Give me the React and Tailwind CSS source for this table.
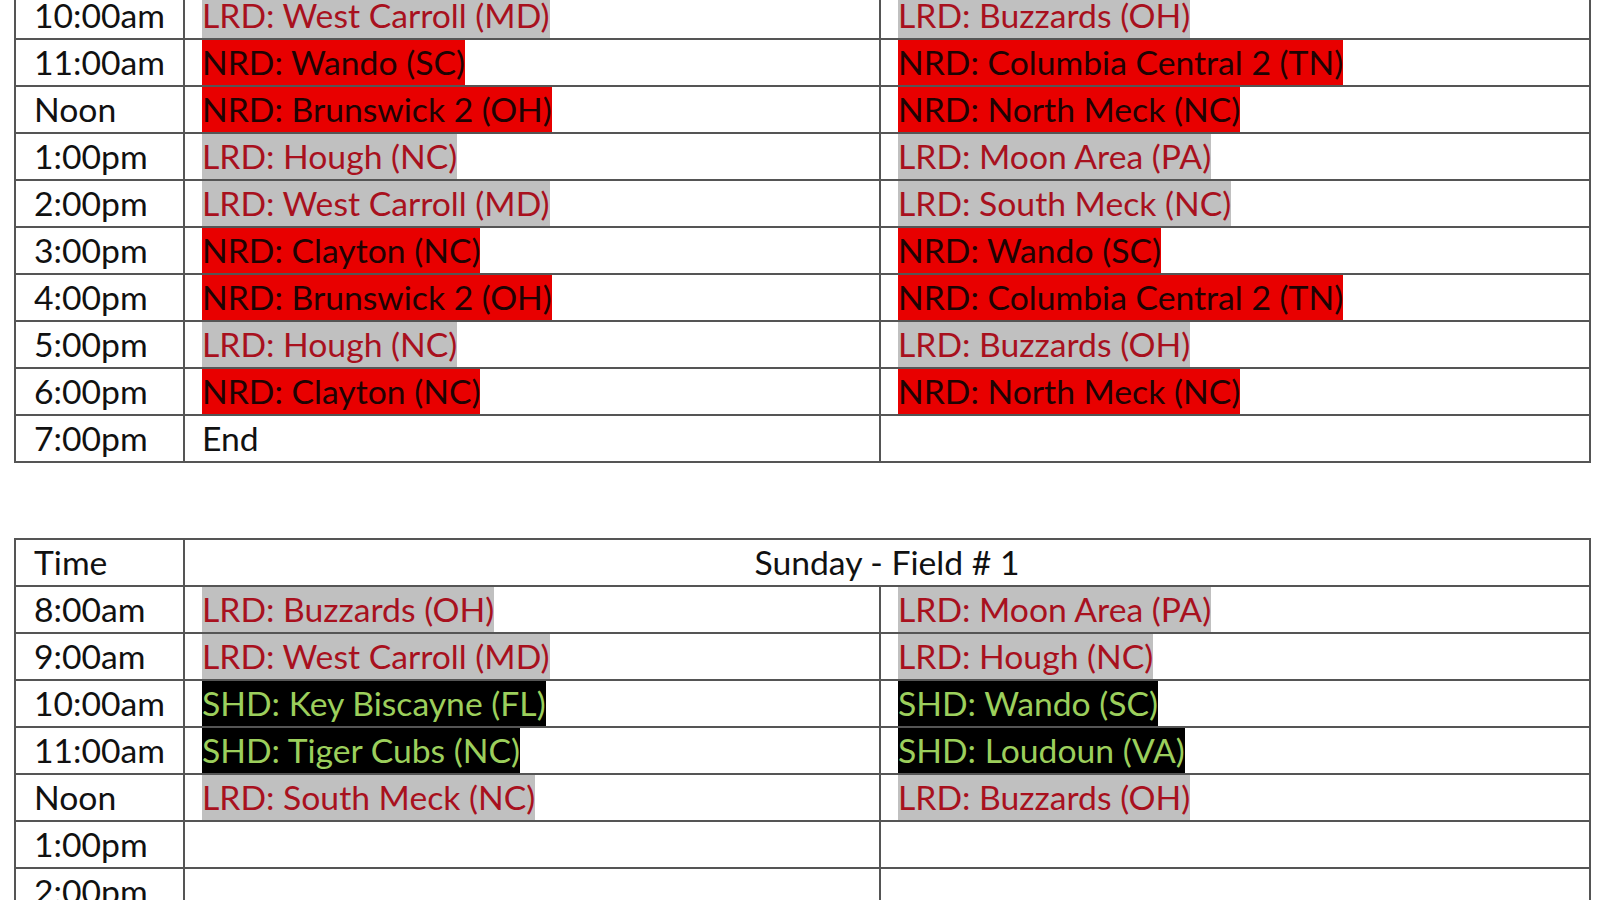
const saturday = [
  ["10:00am", "LRD: West Carroll (MD)", "LRD: Buzzards (OH)"],
  ["11:00am", "NRD: Wando (SC)", "NRD: Columbia Central 2 (TN)"],
  ["Noon", "NRD: Brunswick 2 (OH)", "NRD: North Meck (NC)"],
  ["1:00pm", "LRD: Hough (NC)", "LRD: Moon Area (PA)"],
  ["2:00pm", "LRD: West Carroll (MD)", "LRD: South Meck (NC)"],
  ["3:00pm", "NRD: Clayton (NC)", "NRD: Wando (SC)"],
  ["4:00pm", "NRD: Brunswick 2 (OH)", "NRD: Columbia Central 2 (TN)"],
  ["5:00pm", "LRD: Hough (NC)", "LRD: Buzzards (OH)"],
  ["6:00pm", "NRD: Clayton (NC)", "NRD: North Meck (NC)"],
  ["7:00pm", "End", ""],
];

const sunday = [
  ["8:00am", "LRD: Buzzards (OH)", "LRD: Moon Area (PA)"],
  ["9:00am", "LRD: West Carroll (MD)", "LRD: Hough (NC)"],
  ["10:00am", "SHD: Key Biscayne (FL)", "SHD: Wando (SC)"],
  ["11:00am", "SHD: Tiger Cubs (NC)", "SHD: Loudoun (VA)"],
  ["Noon", "LRD: South Meck (NC)", "LRD: Buzzards (OH)"],
  ["1:00pm", "", ""],
  ["2:00pm", "", ""],
];

const Game = ({ text }) => {
  if (!text) return null;
  if (text.startsWith("LRD")) {
    return <span className="inline-block h-full bg-[#c0c0c0] text-[#a8111e]">{text}</span>;
  }
  if (text.startsWith("NRD")) {
    return <span className="inline-block h-full bg-[#e80000] text-[#1e0303]">{text}</span>;
  }
  if (text.startsWith("SHD")) {
    return <span className="inline-block h-full bg-black text-[#9ccf5c]">{text}</span>;
  }
  return <span className="inline-block h-full text-[#111]">{text}</span>;
};

const Row = ({ row }) => (
  <div className="grid grid-cols-[167px_696px_710px] h-[47px] border-b-2 border-[#555]">
    <div className="pl-[18px] text-[#111]">{row[0]}</div>
    <div className="border-l-2 border-[#555] pl-[17px] h-[45px]">
      <Game text={row[1]} />
    </div>
    <div className="border-l-2 border-[#555] pl-[17px] h-[45px]">
      <Game text={row[2]} />
    </div>
  </div>
);

export default function App() {
  return (
    <div
      className="h-screen w-full overflow-hidden bg-white text-[33.7px] leading-[45px]"
      style={{ fontFamily: "Lato, 'Open Sans', sans-serif" }}
    >
      <div className="ml-[14px] -mt-[9px] w-[1577px] border-2 border-b-0 border-[#555]">
        {saturday.map((r) => (
          <Row key={r[0]} row={r} />
        ))}
      </div>

      <div className="ml-[14px] mt-[75px] w-[1577px] border-2 border-b-0 border-[#555]">
        <div className="grid grid-cols-[167px_1406px] h-[47px] border-b-2 border-[#555]">
          <div className="pl-[18px] text-[#111]">Time</div>
          <div className="border-l-2 border-[#555] text-center text-[#111]">Sunday - Field # 1</div>
        </div>
        {sunday.map((r) => (
          <Row key={r[0]} row={r} />
        ))}
      </div>
    </div>
  );
}
